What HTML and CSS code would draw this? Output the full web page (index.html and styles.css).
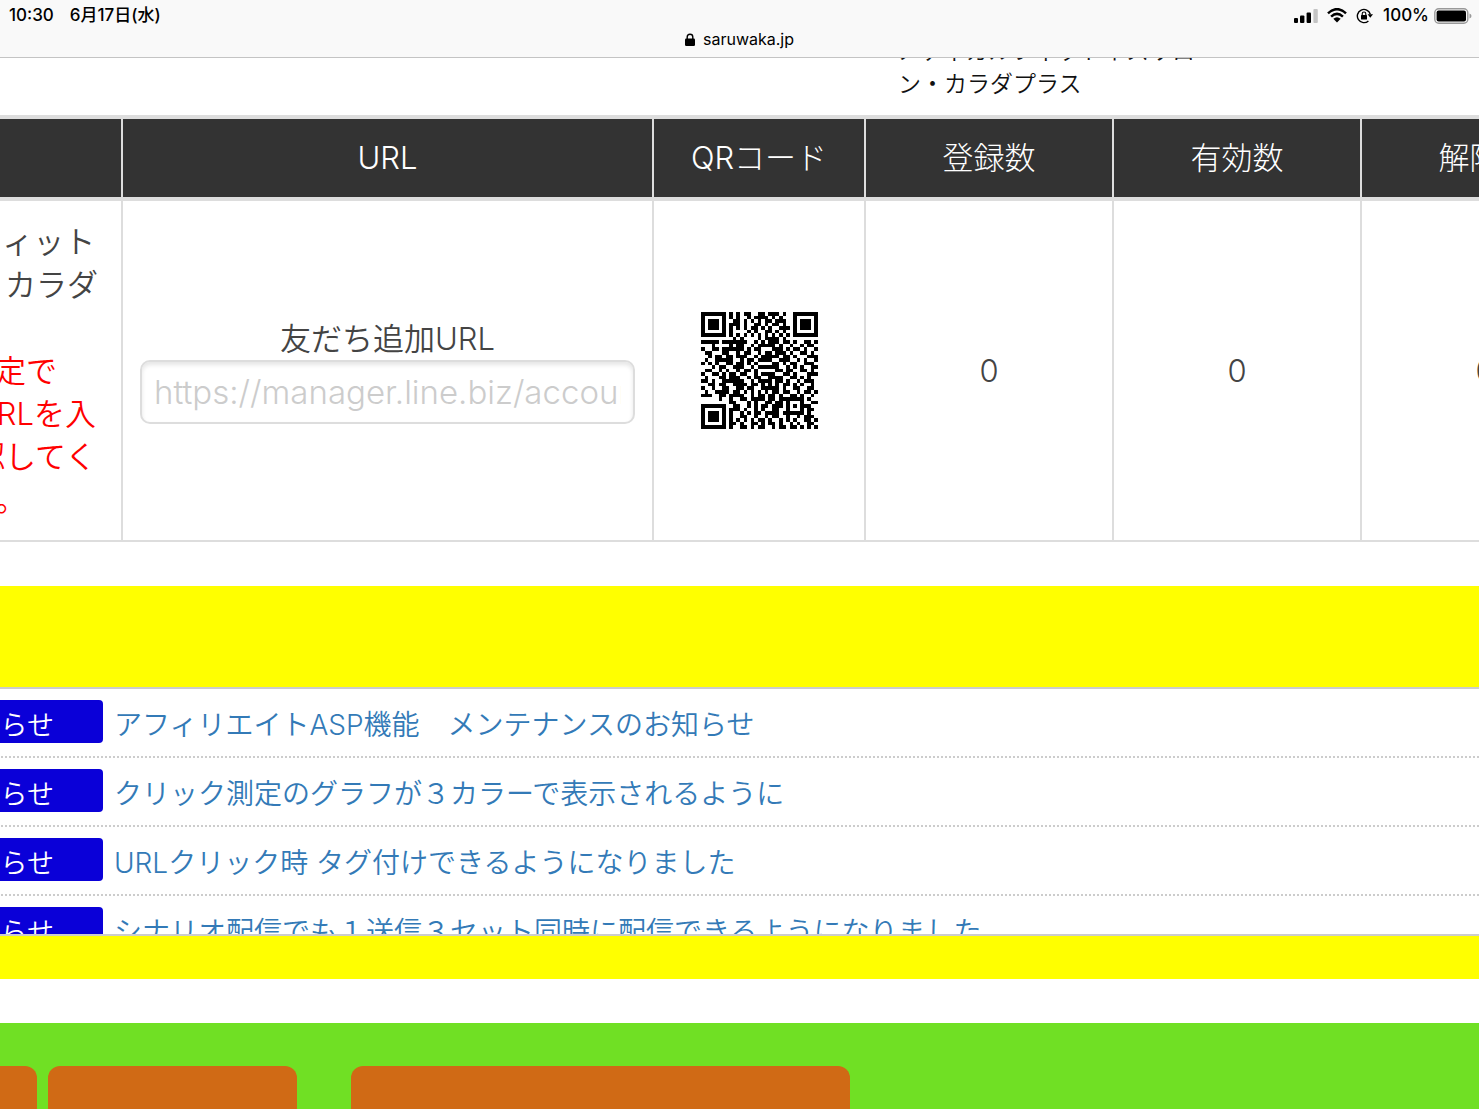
FILE: index.html
```html
<!DOCTYPE html>
<html lang="ja">
<head>
    <meta charset="UTF-8">
    <meta name="viewport" content="width=device-width, initial-scale=1.0">
    <title>saruwaka.jp</title>
    <link rel="stylesheet" href="styles.css">
</head>
<body>

<header class="browser-bar">
    <div class="status">
        <div class="status-left">
            <span>10:30</span>
            <span>6月17日(水)</span>
        </div>
        <div class="status-right">
            <svg class="signal" width="24" height="15" viewBox="0 0 24 15">
                <rect x="0" y="10" width="4" height="5" rx="1"/>
                <rect x="6" y="7.5" width="4.4" height="7.5" rx="1"/>
                <rect x="12.6" y="4.5" width="4.4" height="10.5" rx="1"/>
                <rect x="19.4" y="1" width="4.4" height="14" rx="1" fill="#c4c4c4"/>
            </svg>
            <svg class="wifi" width="20" height="15" viewBox="0 0 20 15">
                <path d="M1 5.3Q10-3 19 5.3M4.1 8.6Q10 3.2 15.9 8.6" fill="none" stroke="#000" stroke-width="2.5"/>
                <path d="M6.3 10.8Q10 7.6 13.7 10.8L10 14.6z"/>
            </svg>
            <svg class="lock-rotation" width="18" height="16" viewBox="0 0 18 16">
                <path d="M14.3 6.2A6.6 6.6 0 1 0 12.4 12.9" fill="none" stroke="#000" stroke-width="1.4"/>
                <path d="M11.6 6.2h5.4l-2.7 3.6z"/>
                <rect x="5" y="7" width="6" height="4.5" rx=".6"/>
                <path d="M6.2 7.4V5.8a1.8 1.8 0 0 1 3.6 0v1.6" fill="none" stroke="#000" stroke-width="1.1"/>
            </svg>
            <span>100%</span>
            <svg class="battery" width="38" height="16" viewBox="0 0 38 16">
                <rect x=".8" y=".8" width="33" height="14.4" rx="4" fill="none" stroke="#999" stroke-width="1.4"/>
                <rect x="2.6" y="2.6" width="29.4" height="10.8" rx="2"/>
                <path d="M35.5 5.5q2 .8 2 2.5t-2 2.5z" fill="#999"/>
            </svg>
        </div>
    </div>
    <div class="address">
        <svg width="10" height="13" viewBox="0 0 10 13">
            <rect x="0" y="5.5" width="10" height="7.5" rx="1.2"/>
            <path d="M2.2 6.5V4a2.8 2.8 0 0 1 5.6 0v2.5" fill="none" stroke="#000" stroke-width="1.4"/>
        </svg>
        <span>saruwaka.jp</span>
    </div>
</header>

<main class="page">
    <p class="account-name">メディカルフィットネスサロン・カラダプラス</p>

    <table class="accounts">
        <colgroup>
            <col class="col-name">
            <col class="col-url">
            <col class="col-qr">
            <col class="col-count">
            <col class="col-count">
            <col class="col-count">
        </colgroup>
        <thead>
            <tr>
                <th>名前</th>
                <th>URL</th>
                <th>QRコード</th>
                <th>登録数</th>
                <th>有効数</th>
                <th>解除数</th>
            </tr>
        </thead>
        <tbody>
            <tr>
                <td class="name">
                    メディカルフィット<br>ネスサロン・カラダ<br>プラス
                    <div class="notice">1.基本情報設定で<br>友だち追加URLを入<br>力し必ず確認してく<br>ださい(必須)。</div>
                </td>
                <td>
                    <label for="friend-url">友だち追加URL</label>
                    <input type="text" id="friend-url" placeholder="https://manager.line.biz/account">
                </td>
                <td><svg class="qr" id="qr" viewBox="0 0 33 33" role="img" aria-label="QRコード"></svg></td>
                <td>0</td>
                <td>0</td>
                <td>0</td>
            </tr>
        </tbody>
    </table>

    <section class="news">
        <ul class="news-list">
            <li><span class="badge">お知らせ</span><a href="#">アフィリエイトASP機能　メンテナンスのお知らせ</a></li>
            <li><span class="badge">お知らせ</span><a href="#">クリック測定のグラフが３カラーで表示されるように</a></li>
            <li><span class="badge">お知らせ</span><a href="#">URLクリック時 タグ付けできるようになりました</a></li>
            <li><span class="badge">お知らせ</span><a href="#">シナリオ配信でも１送信３セット同時に配信できるようになりました</a></li>
        </ul>
    </section>

    <section class="menu">
        <button class="menu-button" type="button" aria-label="メニュー1"></button>
        <button class="menu-button" type="button" aria-label="メニュー2"></button>
        <button class="menu-button wide" type="button" aria-label="メニュー3"></button>
    </section>
</main>

<script>
    // QRコードのセル (33 x 33)
    const rows = [
        '#######.#.#.##..##.###.#..#######',
        '#.....#.#.#..#.####.#.#...#.....#',
        '#.###.#..##.#.#.#.##.###..#.###.#',
        '#.###.#.###.#..##.#.##.#..#.###.#',
        '#.###.#.#.#.#.##.#.#..###.#.###.#',
        '#.....#.#....#.#..##.#.#..#.....#',
        '#######.#.#.#.#.#.#.#.#.#.#######',
        '.........#.#....#.####.#.........',
        '#####.#######..#.#.###.##.#..##.#',
        '...#....#.##..#.#####.#..#..#.##.',
        '#..##.######.#.##...###.#.##.#..#',
        '.##...##..#.##..#.##.###.#..##.#.',
        '..#.##.##.###..#.#####.##.#...###',
        '.#..#####..#.##.####..###..#.#..#',
        '#.#.#..##.##.#.#....##.#.##..###.',
        '...#.##..###..#.######..#.#.#..##',
        '.##..#.#..#.##.#.....##.##..##.#.',
        '#..##.#.##.##..#.####..##.#...###',
        '.#...##.###..#.##..####..##.#.#..',
        '##.#..######..#.####.##.#..#.###.',
        '..##.##..####.##.#.#.#.##.#.#..#.',
        '#..#..##..##.##..#####.#..##..##.',
        '.#..####.##.#.#.#.#.##.##..#.##.#',
        '###..##.####..#.##.##.#..##.#..#.',
        '.....#..#..##.####.##.#######.#..',
        '........##...#.#..##.##.#...#..##',
        '#######..##..#.#.##.###.#.#.###..',
        '#.....#.###.#..#.#..##..#...#.##.',
        '#.###.#.#..#.#.##.####.######.#..',
        '#.###.#.#..##..#..#.##..#..#.###.',
        '#.###.#.#.#.#.#.##.#..#.#.#..##.#',
        '#.....#.##.#..##.#.##.#..#.#..##.',
        '#######.#..##.#.##..#.##.##.#.#.#'
    ];

    let d = '';
    rows.forEach((row, y) => {
        [...row].forEach((cell, x) => {
            if (cell === '#') d += `M${x} ${y}h1v1h-1z`;
        });
    });
    document.getElementById('qr').innerHTML = `<path d="${d}"/>`;
</script>

</body>
</html>
```

FILE: styles.css
```css
body {
    margin: 0;
    font-family: Inter, "Noto Sans CJK JP", sans-serif;
    font-weight: 350;
    color: #444;
    background-color: #fff;
    overflow: hidden;
}
svg {
    display: block;
}

/* ブラウザのバー */
.browser-bar {
    position: relative;
    z-index: 1;
    height: 57px;
    background-color: #f9f9f9;
    border-bottom: 1px solid #c4c4c4;
    color: #000;
    font-size: 16px;
    font-weight: 400;
}
.status {
    display: flex;
    justify-content: space-between;
    padding: 4px 7px 0 9px;
    font-size: 17px;
    line-height: 23px;
    font-weight: 500;
}
.status-left {
    display: flex;
    gap: 16px;
}
.status-right {
    display: flex;
    align-items: center;
    gap: 9px;
}
.battery {
    margin-left: -4px;
}
.address {
    display: flex;
    justify-content: center;
    align-items: center;
    gap: 8px;
    line-height: 24px;
}

/* 横スクロールした位置のページ */
.page {
    margin-left: -200px;
}
.account-name {
    width: 310px;
    margin: -23px 0 14px 1098px;
    font-size: 23px;
    line-height: 33px;
    color: #111;
    word-break: break-all;
}

.accounts {
    width: 1808px;
    table-layout: fixed;
    border-collapse: collapse;
    font-size: 31px;
    line-height: 43px;
    text-align: center;
}
.col-name {
    width: 321px;
}
.col-url {
    width: 531px;
}
.col-qr {
    width: 212px;
}
.col-count {
    width: 248px;
}
.accounts th,
.accounts td {
    border: 2px solid #ddd;
    padding: 19px 17px;
}
.accounts th {
    padding: 18px 17px;
    border-top-width: 4px;
    border-bottom-width: 4px;
    background-color: #333;
    color: #fff;
    font-weight: 300;
    line-height: 42px;
}
.accounts .name {
    text-align: left;
    white-space: nowrap;
}
.notice {
    color: #f00;
}
.accounts label {
    display: block;
}
.accounts input {
    box-sizing: border-box;
    display: block;
    width: 100%;
    height: 64px;
    padding: 0 12px;
    border: 2px solid #ddd;
    border-radius: 10px;
    box-shadow: inset 0 3px 4px rgba(0, 0, 0, 0.1);
    font: inherit;
    font-size: 33px;
    font-weight: 300;
}
.accounts input::placeholder {
    color: #ccc;
    opacity: 1;
}
.qr {
    width: 117px;
    height: 117px;
    margin: 0 auto;
    fill: #000;
    shape-rendering: crispEdges;
}

/* お知らせ */
.news {
    margin: 44px 0;
    padding: 101px 0 43px;
    background-color: #ff0;
}
.news-list {
    height: 245px;
    margin: 0;
    padding: 0;
    border: solid #ccc;
    border-width: 2px 0;
    background-color: #fff;
    list-style: none;
    overflow: hidden;
}
.news-list li {
    display: flex;
    gap: 11px;
    padding: 11px 0 13px 12px;
    border-bottom: 2px dotted #ccc;
    font-size: 28px;
    line-height: 51px;
}
.badge {
    box-sizing: border-box;
    width: 291px;
    height: 43px;
    padding-right: 49px;
    border-radius: 4px;
    background-color: #0a00d8;
    color: #fff;
    font-size: 27px;
    text-align: right;
}
.news-list a {
    height: 43px;
    color: #337ab7;
    text-decoration: none;
}

/* メニュー */
.menu {
    display: flex;
    gap: 11px;
    padding: 43px 0 43px;
    background-color: #70e024;
}
.menu-button {
    width: 249px;
    height: 120px;
    padding: 0;
    border: 0;
    border-radius: 12px;
    background-color: #d06a15;
}
.menu-button:first-child {
    width: 237px;
}
.menu-button.wide {
    width: 499px;
    margin-left: 43px;
}
```
